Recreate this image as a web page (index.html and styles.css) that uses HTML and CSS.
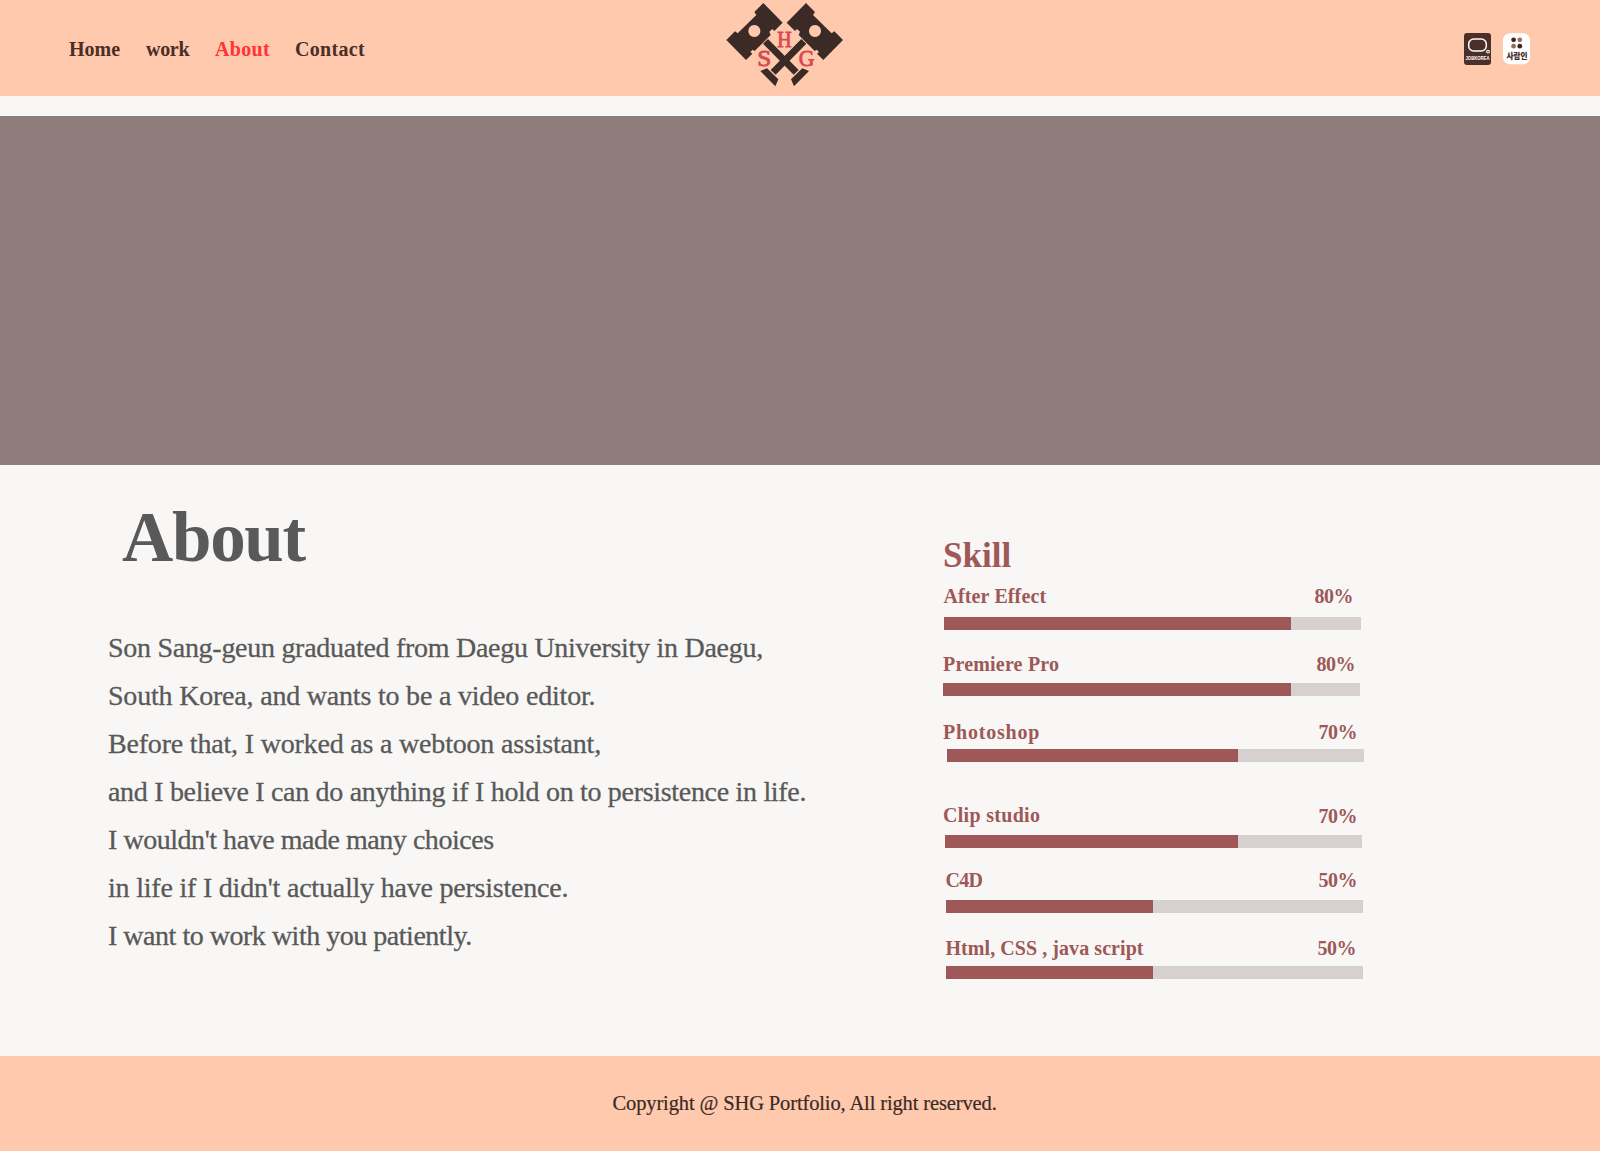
FILE: index.html
```html
<!DOCTYPE html>
<html lang="en">
<head>
<meta charset="utf-8">
<title>SHG Portfolio - About</title>
<link rel="stylesheet" href="styles.css">
</head>
<body>
<header class="header">
  <nav class="nav">
    <a class="nav-home">Home</a>
    <a class="nav-work">work</a>
    <a class="nav-about">About</a>
    <a class="nav-contact">Contact</a>
  </nav>
  <svg class="logo" viewBox="0 0 450 288" width="150" height="96" role="img" aria-label="SHG">
    <defs>
      <g id="piston">
        <path fill="#3b2a25" fill-rule="evenodd" d="M160 9L218 68L193 93L187 87L178 95L182 105L134 153L128 149L121 156L127 161L108 180L49 120L75 94L83 100L139 45L133 36ZM133 75a18 18 0 1 0 .1 0Z"/>
        <path fill="#3b2a25" d="M174 117L159 131L251 224L266 210ZM151 213L171 205L205 238L196 259Z"/>
      </g>
    </defs>
    <use href="#piston"/>
    <use href="#piston" transform="translate(448 0) scale(-1 1)"/>
    <g class="logo-text">
      <text x="202" y="141" textLength="43" lengthAdjust="spacingAndGlyphs">H</text>
      <text x="142" y="199" textLength="42" lengthAdjust="spacingAndGlyphs">S</text>
      <text x="266" y="199" textLength="47" lengthAdjust="spacingAndGlyphs">G</text>
    </g>
  </svg>
  <div class="links">
    <svg width="27" height="32" viewBox="0 0 27 32" role="img" aria-label="JOBKOREA">
      <rect width="27" height="32" rx="3" fill="#4c2f27"/>
      <rect x="4.7" y="6" width="17.6" height="12" rx="5" fill="none" stroke="#fff" stroke-width="1.5"/>
      <circle cx="24" cy="18.6" r="1.4" fill="none" stroke="#fff" stroke-width="1.1"/>
      <text class="job-text" x="1.5" y="27" textLength="24" lengthAdjust="spacingAndGlyphs">JOBKOREA</text>
    </svg>
    <svg width="27" height="32" viewBox="0 0 27 32" role="img" aria-label="사람인">
      <rect y=".3" width="27" height="31" rx="7" fill="#fff"/>
      <circle cx="10.6" cy="6.8" r="2.4" fill="#3f2520"/>
      <circle cx="16.8" cy="6.8" r="2.4" fill="#9a6a5a"/>
      <circle cx="10.6" cy="13.2" r="2.4" fill="#9a6a5a"/>
      <circle cx="16.8" cy="13.2" r="2.4" fill="#3f2520"/>
      <text class="saramin-text" x="3.4" y="26.3" textLength="21" lengthAdjust="spacingAndGlyphs">사람인</text>
    </svg>
  </div>
</header>
<div class="hero"></div>
<main class="main">
  <section class="about">
    <h1>About</h1>
    <p class="l1">Son Sang-geun graduated from Daegu University in Daegu,</p>
    <p class="l2">South Korea, and wants to be a video editor.</p>
    <p class="l3">Before that, I worked as a webtoon assistant,</p>
    <p class="l4">and I believe I can do anything if I hold on to persistence in life.</p>
    <p class="l5">I wouldn't have made many choices</p>
    <p class="l6">in life if I didn't actually have persistence.</p>
    <p class="l7">I want to work with you patiently.</p>
  </section>
  <section class="skills">
    <h2>Skill</h2>
    <div class="skill after"><div class="label"><span>After Effect</span><b>80%</b></div><div class="bar"><i></i></div></div>
    <div class="skill premiere"><div class="label"><span>Premiere Pro</span><b>80%</b></div><div class="bar"><i></i></div></div>
    <div class="skill photoshop"><div class="label"><span>Photoshop</span><b>70%</b></div><div class="bar"><i></i></div></div>
    <div class="skill clip"><div class="label"><span>Clip studio</span><b>70%</b></div><div class="bar"><i></i></div></div>
    <div class="skill c4d"><div class="label"><span>C4D</span><b>50%</b></div><div class="bar"><i></i></div></div>
    <div class="skill web"><div class="label"><span>Html, CSS , java script</span><b>50%</b></div><div class="bar"><i></i></div></div>
  </section>
</main>
<footer class="footer">Copyright @ SHG Portfolio, All right reserved.</footer>
</body>
</html>
```
FILE: styles.css
```css
* { box-sizing: border-box; }
body {
  margin: 0;
  background: #f8f7f5;
  font-family: "Liberation Serif", "Noto Sans CJK KR", serif;
}
h1, h2, p { margin: 0; }

.header {
  display: grid;
  grid-template-columns: 710px 150px 1fr;
  height: 96px;
  background: #ffc9ae;
}
.nav {
  display: flex;
  padding: 37px 0 0 69px;
  font-size: 20px;
  font-weight: 700;
  line-height: 24px;
  color: #4b2e25;
}
.nav-home { width: 77px; }
.nav-work { width: 69px; letter-spacing: -.3px; }
.nav-about { width: 80px; letter-spacing: .35px; color: #ff3236; }
.nav-contact { letter-spacing: .3px; }
.logo { display: block; }
.logo-text { font-size: 67px; fill: #d9484d; stroke: #d9484d; stroke-width: 2.5px; }
.links {
  display: flex;
  justify-content: flex-end;
  gap: 12px;
  padding: 33px 70px 0 0;
}
.job-text { font: 700 5.6px "Liberation Sans", sans-serif; fill: #fff; }
.saramin-text { font: 900 8.5px "Noto Sans CJK KR", sans-serif; fill: #3f2520; }

.hero { height: 349px; margin-top: 20px; background: #8f7d7c; }

.main {
  display: grid;
  grid-template-columns: 835px 1fr;
  height: 591px;
  padding-left: 108px;
}
.about { color: #595959; }
.about h1 {
  margin: 32px 0 47px 14px;
  font-size: 71px;
  line-height: 80px;
  letter-spacing: -1.3px;
}
.about p {
  font-size: 28px;
  line-height: 48px;
  white-space: nowrap;
  -webkit-text-stroke: .3px #595959;
}
.about .l1 { letter-spacing: -.28px; }
.about .l2 { letter-spacing: -.2px; }
.about .l3 { letter-spacing: -.19px; }
.about .l4 { letter-spacing: -.31px; }
.about .l5 { letter-spacing: -.46px; }
.about .l6 { letter-spacing: -.21px; }
.about .l7 { letter-spacing: -.48px; }

.skills { width: 430px; padding-top: 71px; color: #9e5858; }
.skills h2 { margin-bottom: 8px; font-size: 35px; line-height: 40px; }
.label {
  display: flex;
  justify-content: space-between;
  height: 24px;
  font-size: 20px;
  font-weight: 700;
  line-height: 24px;
}
.label b { letter-spacing: -.5px; }
.bar { width: 417px; height: 13px; background: #d6d0cf; }
.bar i { display: block; height: 100%; background: #9e5858; }

.after { margin-bottom: 22px; }
.after .label { margin-bottom: 9px; padding: 0 20px 0 .5px; letter-spacing: .12px; }
.after .bar { margin-left: 1px; }
.after i { width: 347px; }
.premiere { margin-bottom: 24px; }
.premiere .label { margin-bottom: 7px; padding-right: 18px; letter-spacing: .2px; }
.premiere i { width: 348px; }
.photoshop { margin-bottom: 41px; }
.photoshop .label { margin-bottom: 5px; padding-right: 16px; letter-spacing: .8px; }
.photoshop .bar { margin-left: 4px; }
.photoshop i { width: 291px; }
.clip { margin-bottom: 20px; }
.clip .label { margin-bottom: 8px; padding-right: 16px; letter-spacing: .3px; }
.clip b { padding-top: 1px; }
.clip .bar { margin-left: 2px; }
.clip i { width: 293px; }
.c4d { margin-bottom: 23px; }
.c4d .label { margin-bottom: 8px; padding: 0 16px 0 2.5px; letter-spacing: -.7px; }
.c4d .bar, .web .bar { margin-left: 3px; }
.c4d i, .web i { width: 207px; }
.web .label { margin-bottom: 6px; padding: 0 17px 0 2.5px; letter-spacing: .06px; }

.footer {
  height: 95px;
  padding: 35px 0 0 612.5px;
  background: #ffc9ae;
  color: #3b2a25;
  font-size: 20.5px;
  line-height: 24px;
  letter-spacing: -.13px;
  -webkit-text-stroke: .2px #3b2a25;
}
```
